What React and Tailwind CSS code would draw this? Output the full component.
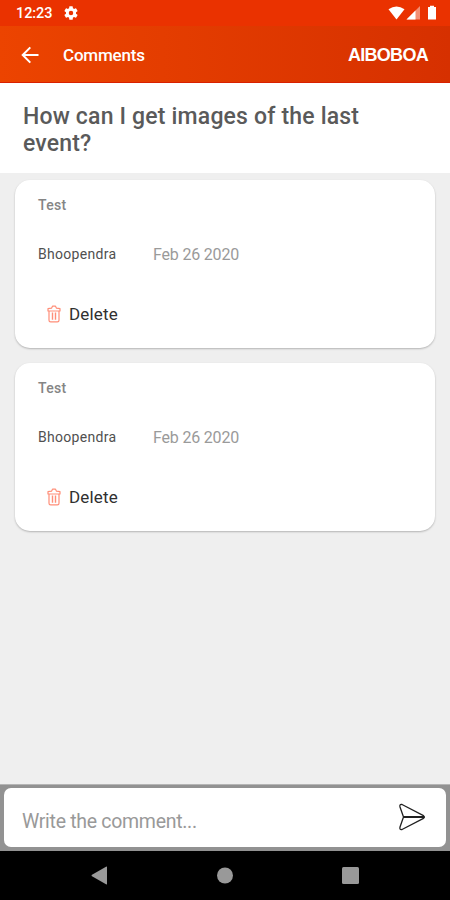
import { useState } from "react";

const initialComments = [
  { id: 1, text: "Test", author: "Bhoopendra", date: "Feb 26 2020" },
  { id: 2, text: "Test", author: "Bhoopendra", date: "Feb 26 2020" },
];

const StatusBar = () => (
  <div className="flex h-[26px] shrink-0 items-center bg-[#ea3200] pl-4 pr-3 text-white">
    <span className="pt-[3px] text-[14.5px] font-medium leading-none tracking-[-0.1px]">
      12:23
    </span>
    <svg viewBox="2 2 20 20" className="ml-3 size-[14px]" fill="currentColor">
      <path d="M19.14 12.94c.04-.3.06-.61.06-.94s-.02-.64-.07-.94l2.03-1.58a.49.49 0 0 0 .12-.61l-1.92-3.32a.49.49 0 0 0-.59-.22l-2.39.96a7 7 0 0 0-1.62-.94l-.36-2.54A.48.48 0 0 0 13.92 2.4h-3.84a.48.48 0 0 0-.48.41l-.36 2.54a7.4 7.4 0 0 0-1.62.94l-2.39-.96a.48.48 0 0 0-.59.22L2.72 8.87a.48.48 0 0 0 .12.61l2.03 1.58a6 6 0 0 0 0 1.88l-2.03 1.58a.49.49 0 0 0-.12.61l1.92 3.32c.12.22.37.29.59.22l2.39-.96c.5.38 1.03.7 1.62.94l.36 2.54c.05.24.24.41.48.41h3.84c.24 0 .44-.17.47-.41l.36-2.54a7 7 0 0 0 1.62-.94l2.39.96c.22.08.47 0 .59-.22l1.92-3.32a.48.48 0 0 0-.12-.61zM12 15.2a3.2 3.2 0 1 1 0-6.4 3.2 3.2 0 0 1 0 6.4z" />
    </svg>
    <svg viewBox="0 0 50 16" className="ml-auto h-4 w-[50px]" fill="currentColor">
      <path d="M.5 4.3Q8.5-1.5 16.5 4.3L8.5 14.500z" />
      <path d="M32 1v13.500H18.500z" opacity=".45" />
      <path d="M27.500 5.500v9h-9z" />
      <path d="M40 2h2V.7h4V2h2v12.500h-8z" />
    </svg>
  </div>
);

const Header = () => (
  <header className="flex h-[57px] shrink-0 items-center border-b border-[#d92000] bg-linear-to-r from-[#ec4400] to-[#d63000] pl-[21px] pr-[22px] pt-0.5 text-white">
    <button aria-label="Back">
      <svg
        viewBox="0 0 18 18"
        className="size-[18px]"
        fill="none"
        stroke="currentColor"
        strokeWidth="2"
      >
        <path d="M17.500 9H2M9.300 1.400 1.700 9l7.600 7.600" />
      </svg>
    </button>
    <h1 className="ml-6 pt-0.5 text-[17px] font-medium tracking-[-0.2px]">
      Comments
    </h1>
    <span className="ml-auto pt-px font-['Liberation_Sans',sans-serif] text-[18px] font-bold tracking-[-0.7px]">
      AIBOBOA
    </span>
  </header>
);

const TrashIcon = () => (
  <svg
    viewBox="0 0 14 18"
    className="h-[18px] w-[14px]"
    fill="none"
    stroke="#ff8e78"
    strokeWidth="1.2"
    strokeLinejoin="round"
  >
    <path d="M1 6V3.700l3.500-.5L5.500 1.200h3l1 2 3.500.5V6zM2 6v9.200c0 1 .6 1.700 1.600 1.700h6.800c1 0 1.600-.7 1.600-1.700V6" />
    <path d="M5.500 7.500v7.200M8.500 7.500v7.200" strokeWidth="1.400" />
  </svg>
);

const CommentCard = ({ comment, onDelete }) => (
  <li className="flex h-[168px] flex-col items-start rounded-[15px] bg-white pl-[23px] pt-[15px] shadow-[0_1px_2px_rgba(0,0,0,0.25)]">
    <p className="text-[14px] font-medium leading-5 tracking-[0.3px] text-[#858585]">
      {comment.text}
    </p>
    <div className="mt-[29px] flex items-center leading-5">
      <span className="w-[115px] pb-px text-[14px] tracking-[0.3px] text-[#505050]">
        {comment.author}
      </span>
      <span className="pt-px text-[16px] tracking-[-0.18px] text-[#9a9a9a]">
        {comment.date}
      </span>
    </div>
    <button
      onClick={() => onDelete(comment.id)}
      className="ml-[9px] mt-[39px] flex items-center gap-2 text-[17px] leading-5 tracking-[0.15px] text-[#303030]"
    >
      <TrashIcon />
      Delete
    </button>
  </li>
);

const CommentForm = ({ onSend }) => {
  const [text, setText] = useState("");

  const submitHandler = (e) => {
    e.preventDefault();
    if (!text.trim()) return;
    onSend(text);
    setText("");
  };

  return (
    <form
      onSubmit={submitHandler}
      className="h-[67px] shrink-0 border-t border-[#b5b5b5] bg-[#929292] px-1 pb-1 pt-[3px]"
    >
      <div className="flex h-full items-center rounded-[7px] bg-white pl-[18px] pr-5">
        <input
          value={text}
          onChange={(e) => setText(e.target.value)}
          placeholder="Write the comment..."
          className="min-w-0 flex-1 pt-2 text-[19.5px] tracking-[-0.3px] text-[#505050] outline-none placeholder:text-[#999999]"
        />
        <button aria-label="Send" className="pb-0.5">
          <svg
            viewBox="0 0 28 28"
            className="size-7"
            fill="none"
            stroke="#202020"
            strokeWidth="1.300"
            strokeLinejoin="round"
          >
            <path d="M4 1.500 25.500 12.700q1.800 1.300 0 2.600L4 26.500c-1.800.5-2.500-.6-2-2.500L5.500 14 2 4c-.5-1.900.2-3 2-2.500z" />
            <path d="M5.500 14H26" strokeWidth="2" />
          </svg>
        </button>
      </div>
    </form>
  );
};

const NavBar = () => (
  <svg viewBox="0 0 450 49" className="h-[49px] w-full shrink-0 bg-black" fill="#999999">
    <path d="M107 16v17a.6.6 0 0 1-1 .3L92 25.200a.8.800 0 0 1 0-1.400L106 15.700a.6.600 0 0 1 1 .3z" />
    <circle cx="225" cy="24.500" r="8" />
    <rect x="342" y="16" width="17" height="17" rx="1.500" />
  </svg>
);

export default function App() {
  const [comments, setComments] = useState(initialComments);

  const deleteHandler = (id) => {
    setComments(comments.filter((comment) => comment.id !== id));
  };

  const sendHandler = (text) => {
    setComments([
      ...comments,
      { id: Date.now(), text, author: "Bhoopendra", date: "Feb 26 2020" },
    ]);
  };

  return (
    <div className="flex h-screen w-full flex-col overflow-hidden bg-[#efefef] font-[Roboto,sans-serif]">
      <StatusBar />
      <Header />
      <h2 className="h-[90px] shrink-0 bg-white pl-[23px] pr-16 pt-5 text-[23px] font-medium leading-[27px] tracking-[0.18px] text-[#5a5a5a]">
        How can I get images of the last event?
      </h2>
      <ul className="flex min-h-0 flex-1 flex-col gap-[15px] overflow-hidden px-[15px] pt-[7px]">
        {comments.map((comment) => (
          <CommentCard key={comment.id} comment={comment} onDelete={deleteHandler} />
        ))}
      </ul>
      <CommentForm onSend={sendHandler} />
      <NavBar />
    </div>
  );
}
